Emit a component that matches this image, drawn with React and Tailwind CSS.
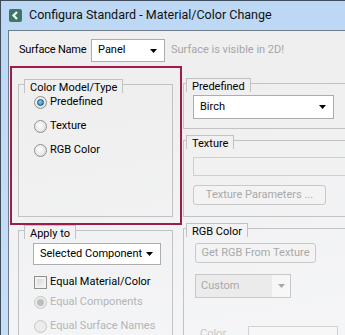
import React from 'react';

// Small Win7-style building blocks
function Arrow({ disabled }) {
  return (
    <svg width="7" height="4" viewBox="0 0 7 4" className="shrink-0">
      <path d="M0 0 H7 L3.5 4 Z" fill={disabled ? '#a8a8a8' : '#000'} />
    </svg>
  );
}

function Select({ value, className }) {
  return (
    <div className={`flex items-center justify-between border border-[#acacac] bg-white pl-[6px] pr-[7px] ${className}`}>
      <span className="whitespace-nowrap">{value}</span>
      <Arrow />
    </div>
  );
}

function Radio({ checked, disabled, label }) {
  return (
    <div className="flex h-[14px] items-center gap-[3px]">
      <span
        className={`flex h-[13px] w-[13px] items-center justify-center rounded-full border ${
          disabled ? 'border-[#c6c6c6] bg-[#ececec]' : 'border-[#8e8f8f] bg-[radial-gradient(circle_at_40%_40%,#ffffff,#d6d6d6)]'
        }`}
      >
        {checked && (
          <span
            className={`h-[7px] w-[7px] rounded-full ${
              disabled ? 'bg-[#bdbdbd]' : 'border border-[#1b4f78] bg-[radial-gradient(circle_at_40%_35%,#7fd0f5,#1b7cb8)]'
            }`}
          />
        )}
      </span>
      <span className={`whitespace-nowrap ${disabled ? 'text-[#b4b4b4]' : ''}`}>{label}</span>
    </div>
  );
}

// Group box with a raised tab caption
function Group({ title, tabOffset, bodyClass, children }) {
  return (
    <div>
      <div className="flex h-[14px] items-start">
        <div className={`mt-[5px] h-[9px] border-l border-t border-[#c2c2c2] ${tabOffset}`} />
        <div className="h-[14px] whitespace-nowrap border-l border-r border-t border-[#c2c2c2] px-[5px] leading-[16px]">{title}</div>
        <div className="mt-[5px] h-[9px] flex-1 border-r border-t border-[#c2c2c2]" />
      </div>
      <div className={`border-b border-l border-r border-[#c2c2c2] ${bodyClass}`}>{children}</div>
    </div>
  );
}

function DisabledButton({ label, className }) {
  return (
    <div className={`flex items-center justify-center whitespace-nowrap rounded-[3px] border border-[#c9c9c9] bg-[#f3f3f3] text-[#a9a9a9] ${className}`}>
      {label}
    </div>
  );
}

export default function App() {
  return (
    <div className="h-[335px] w-[345px] overflow-hidden border-l border-t border-[#3f4d5c] bg-[linear-gradient(180deg,#bcd8f5,#c7dff5)] font-['Roboto',sans-serif] text-[11px] text-black">
      {/* Title bar */}
      <div className="flex h-[29px] items-center gap-[7px] pl-[8px]">
        <svg width="13" height="13" viewBox="0 0 13 13">
          <rect x="0" y="0" width="13" height="13" rx="2" fill="#3e7566" />
          <path d="M8 3 L4.5 6.5 L8 10" stroke="#fff" strokeWidth="2.2" fill="none" />
        </svg>
        <span className="text-[12.5px] text-[#111]">Configura Standard - Material/Color Change</span>
      </div>

      {/* Client area */}
      <div className="ml-[7px] h-[400px] w-[400px] border-l border-t border-[#6f7c89] bg-[linear-gradient(170deg,#efefef_20%,#f7f8fc)]">
        {/* Surface name row */}
        <div className="flex items-center pl-[10px] pt-[8px]">
          <span className="w-[72px] whitespace-nowrap tracking-[-0.2px]">Surface Name</span>
          <Select value="Panel" className="h-[23px] w-[74px]" />
          <span className="ml-[6px] whitespace-nowrap text-[#a6a6a6]">Surface is visible in 2D!</span>
        </div>

        <div className="mt-[4px] flex">
          {/* Left column */}
          <div className="ml-[1px] w-[172px] shrink-0">
            <div className="border-2 border-[#9c1d4b] pb-[6px] pl-[6px] pr-[7px] pt-[11px]">
              <Group title="Color Model/Type" tabOffset="w-[6px]" bodyClass="h-[124px] flex flex-col gap-[10px] pl-[15px] pt-[2px]">
                <Radio checked label="Predefined" />
                <Radio label="Texture" />
                <Radio label="RGB Color" />
              </Group>
            </div>
            <div className="ml-[8px] w-[155px]">
              <Group title="Apply to" tabOffset="w-[6px]" bodyClass="h-[120px] pl-[14px] pt-[4px]">
                <Select value="Selected Component" className="h-[22px] w-[128px]" />
                <div className="mt-[10px] flex h-[14px] items-center gap-[3px] pl-[1px]">
                  <span className="h-[13px] w-[13px] border border-[#8e8f8f] bg-[linear-gradient(135deg,#d4d4d4,#f6f6f6)] shadow-[inset_0_0_0_2px_#f2f2f2]" />
                  <span>Equal Material/Color</span>
                </div>
                <div className="mt-[6px] flex flex-col gap-[10px] pl-[1px]">
                  <Radio checked disabled label="Equal Components" />
                  <Radio disabled label="Equal Surface Names" />
                </div>
              </Group>
            </div>
          </div>

          {/* Right column */}
          <div className="ml-[1px] w-[210px] shrink-0 pt-[12px]">
            <Group title="Predefined" tabOffset="w-[3px]" bodyClass="h-[37px] pl-[9px] pt-[3px]">
              <Select value="Birch" className="h-[24px] w-[141px]" />
            </Group>
            <div className="mt-[6px]">
              <Group title="Texture" tabOffset="w-[3px]" bodyClass="h-[68px] pl-[9px] pt-[8px]">
                <div className="h-[19px] w-[200px] border border-[#cfcfcf] bg-[#f1f1f1]" />
                <DisabledButton label="Texture Parameters ..." className="mt-[9px] h-[20px] w-[133px]" />
              </Group>
            </div>
            <div className="mt-[6px]">
              <Group title="RGB Color" tabOffset="w-[3px]" bodyClass="h-[120px] pl-[11px] pt-[6px]">
                <DisabledButton label="Get RGB From Texture" className="h-[20px] w-[121px]" />
                <div className="mt-[11px] flex h-[24px] w-[96px] items-center border border-[#c9c9c9] bg-[#f7f7f7]">
                  <div className="flex h-full w-[76px] items-center bg-[#ebebeb] pl-[5px] text-[#a9a9a9]">Custom</div>
                  <div className="flex flex-1 items-center justify-center">
                    <Arrow disabled />
                  </div>
                </div>
                <div className="mt-[28px] flex items-start gap-[22px] pl-[5px]">
                  <span className="text-[#c8c8c8]">Color</span>
                  <div className="h-[20px] w-[90px] border border-[#d2d2d2] bg-[#f7f7f7]" />
                </div>
              </Group>
            </div>
          </div>
        </div>
      </div>
    </div>
  );
}
